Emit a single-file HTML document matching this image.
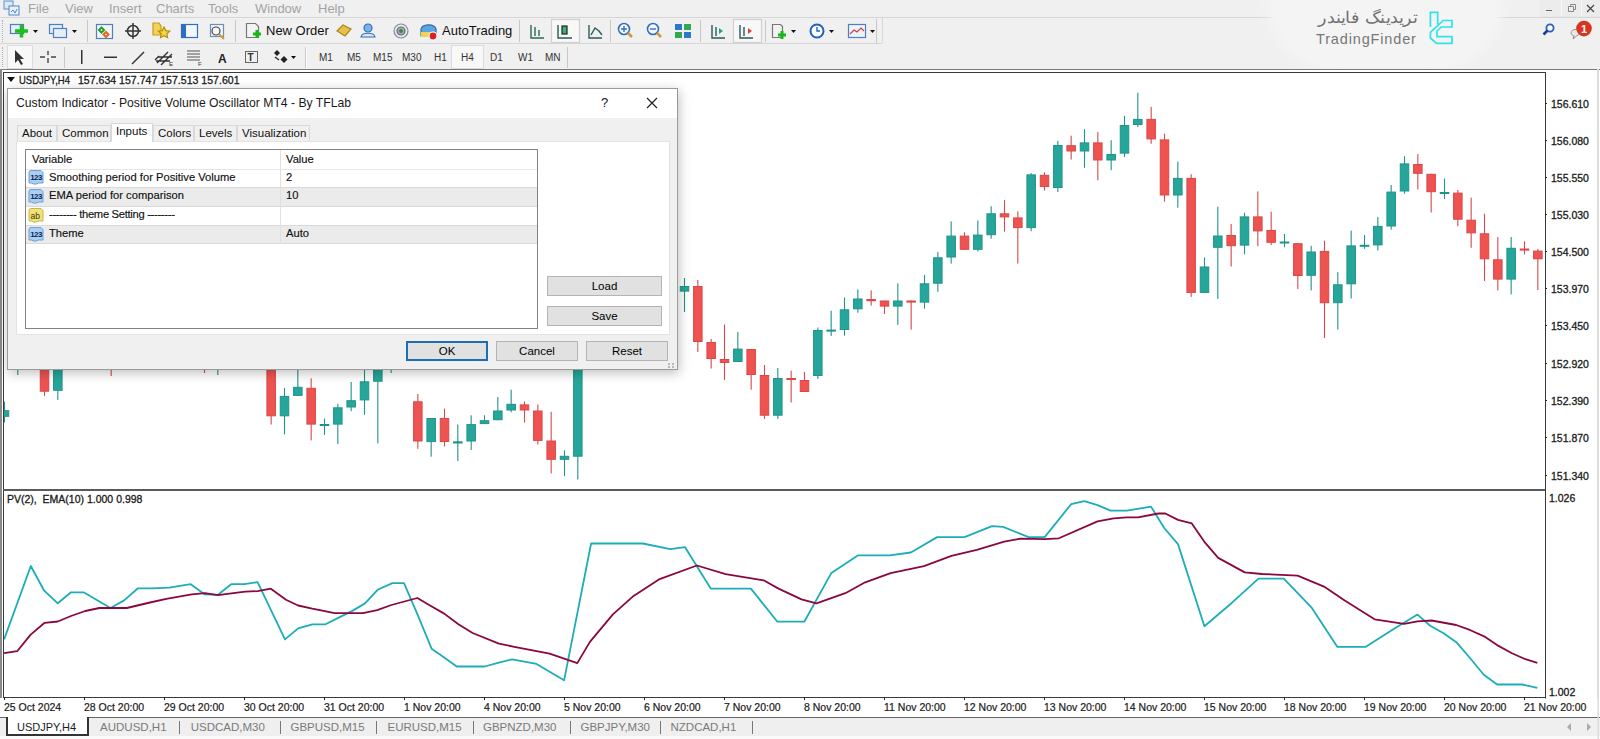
<!DOCTYPE html>
<html><head><meta charset="utf-8"><style>
*{box-sizing:border-box}
body{margin:0;width:1600px;height:739px;overflow:hidden;background:#f0f0f0;font-family:"Liberation Sans",sans-serif;position:relative;color:#000}
.a{position:absolute}
.menu{top:0;left:0;width:1600px;height:17px;font-size:13px;color:#a3a3a3}
.menu span{position:absolute;top:1px}
.tb{font-size:13px;color:#1a1a1a}
.tf{font-size:10px;color:#333;letter-spacing:0}
svg text{font-family:"Liberation Sans",sans-serif}
.ax{font-size:10.5px;fill:#1a1a1a;stroke:#1a1a1a;stroke-width:0.3px}
.dlg{left:7px;top:88px;width:671px;height:282px;background:#f0f0f0;border:1px solid #9a9a9a;box-shadow:1px 3px 11px rgba(0,0,0,0.26)}
.dtitle{left:0;top:0;width:669px;height:29px;background:#fff}
.tab{top:36px;height:16px;font-size:11.5px;color:#111;border:1px solid #d9d9d9;border-bottom:none;background:#f0f0f0;padding-left:4px;line-height:15px}
.grid{left:17px;top:60px;width:513px;height:180px;background:#fff;border:1px solid #828282}
.row{left:0;width:511px;height:19px;font-size:11.2px;line-height:16.5px;color:#111;-webkit-text-stroke:0.15px #111}
.btn{height:20px;background:#e1e1e1;border:1px solid #b4b4b4;font-size:11.5px;text-align:center;line-height:18px;color:#000}
.ctab{top:719px;height:17px;font-size:11.5px;color:#7a7a7a;line-height:17px}
</style></head><body>
<!-- menu -->
<div class="a menu">
 <svg class="a" style="left:3px;top:0px" width="18" height="16" viewBox="0 0 18 16"><rect x="1" y="1" width="9" height="8" fill="#dfe9f5" stroke="#5b8fd0"/><rect x="6" y="6" width="10" height="9" fill="#e9f1fa" stroke="#4d86cf"/><path d="M8 12 L10 10 L12 13 L14 9" stroke="#4d86cf" fill="none"/></svg>
 <span style="left:28px">File</span><span style="left:65px">View</span><span style="left:109px">Insert</span><span style="left:156px">Charts</span><span style="left:208px">Tools</span><span style="left:255px">Window</span><span style="left:318px">Help</span>
</div>
<div class="a" style="left:1540px;top:0;width:60px;height:17px;background:#e8e8e8"></div>
<div class="a" style="left:1545px;top:8px;width:8px;height:1px;background:#555"></div>
<div class="a" style="left:1568px;top:3px;width:8px;height:7px;border:1px solid #777"></div>
<div class="a" style="left:1586px;top:-2px;font-size:14px;color:#444">&#x2715;</div>
<div class="a" style="left:0;top:17px;width:1600px;height:1px;background:#d5d5d5"></div>
<div class="a" style="left:0;top:43px;width:882px;height:1px;background:#d5d5d5"></div><div class="a" style="left:882px;top:18px;width:1px;height:25px;background:#d8d8d8"></div>
<!-- toolbar1 -->
<div class="a" style="left:2px;top:20px;width:2px;height:22px;border-left:1px dotted #b0b0b0"></div>
<div class="a" style="left:2px;top:47px;width:2px;height:20px;border-left:1px dotted #b0b0b0"></div>
<svg class="a" style="left:0;top:18px" width="900" height="26" viewBox="0 0 900 26">
 <g stroke-width="1.2">
 <rect x="10.5" y="6.5" width="13" height="9" fill="#e6eef8" stroke="#4f7fbf"/>
 <path d="M15 13h13M21.5 7v12.5" stroke="#19c019" stroke-width="3.5"/>
 <path d="M33 12h5l-2.5 3z" fill="#111"/>
 <rect x="49.5" y="6.5" width="13" height="9" fill="#e6eef8" stroke="#4f7fbf"/>
 <rect x="53.5" y="10.5" width="13" height="9" fill="#e6eef8" stroke="#4f7fbf"/>
 <path d="M72 12h5l-2.5 3z" fill="#111"/>
 <rect x="87" y="2" width="1" height="22" fill="#c8c8c8"/>
 <rect x="96.5" y="6.5" width="16" height="14" fill="#f2f6fb" stroke="#4f7fbf"/>
 <path d="M101.5 9.5l2.5 2.5-2.5 2.5-2.5-2.5z" fill="none" stroke="#23a023" stroke-width="2"/><path d="M106 14l2.5 2.5-2.5 2.5-2.5-2.5z" fill="none" stroke="#e06a20" stroke-width="2"/>
 <circle cx="133" cy="13" r="5.5" fill="none" stroke="#333" stroke-width="1.5"/><path d="M133 5v16M125 13h16" stroke="#333" stroke-width="1.5"/>
 <path d="M153 5h6l2 3v9h-8z" fill="#f3d25a" stroke="#c59a20"/><path d="M164 9l1.8 3.6 3.9.5-2.8 2.7.7 3.9-3.6-1.9-3.5 1.9.7-3.9-2.9-2.7 4-.5z" fill="#f5d83a" stroke="#b98d10"/>
 <rect x="181.5" y="6.5" width="16" height="13" fill="#f3f7fc" stroke="#2f6fbf"/><rect x="182" y="7" width="4" height="12" fill="#2f6fbf"/>
 <rect x="210.5" y="6.5" width="13" height="12" fill="#f3f7fc" stroke="#6d8fb8"/><circle cx="216" cy="13" r="4" fill="none" stroke="#444"/><path d="M219 16l5 5" stroke="#d19a2a" stroke-width="2"/>
 <rect x="235" y="2" width="1" height="22" fill="#c8c8c8"/>
 <path d="M246.5 5.5h9l3 3v11h-12z" fill="#f4f4f4" stroke="#777"/><path d="M253 16h8M257 12v8" stroke="#19b619" stroke-width="3"/>
 <path d="M337 13l6-6 8 4-6 7z" fill="#e9c04a" stroke="#a98620"/>
 <circle cx="368" cy="10" r="4" fill="#7fb0e6" stroke="#2f6fbf"/><path d="M361 19c1-5 13-5 14 0z" fill="#dfe8f3" stroke="#2f6fbf"/>
 <circle cx="401" cy="13" r="7" fill="#e8ecef" stroke="#889"/><circle cx="401" cy="13" r="4" fill="#aab" stroke="#667"/><circle cx="401" cy="13" r="2" fill="#3a8a3a"/>
 <path d="M421 11c1-5 13-6 15 0v7h-15z" fill="#5aa7e0" stroke="#3a6aa8"/><path d="M421 14h15v5h-15z" fill="#f1d253"/><circle cx="433" cy="18" r="4" fill="#e02020" stroke="#fff"/>
 <rect x="519" y="2" width="1" height="22" fill="#c8c8c8"/>
 <path d="M531 7v13h13M535 9v9M539 12v6" stroke="#2a6a5a" stroke-width="1.4" fill="none"/>
 <rect x="551.5" y="1.5" width="28" height="23" fill="#f8f8f8" stroke="#d0d0d0"/>
 <path d="M558 7v13h14" stroke="#2a5a5a" stroke-width="1.4" fill="none"/><rect x="562" y="8" width="5" height="8" fill="#3bb27b" stroke="#222"/>
 <path d="M589 7v13h13M591 17l4-7 4 3 3 4" stroke="#2a5a5a" stroke-width="1.4" fill="none"/>
 <rect x="610" y="2" width="1" height="22" fill="#c8c8c8"/>
 <circle cx="624" cy="11" r="5.5" fill="#f4f8fd" stroke="#2f6fbf" stroke-width="1.6"/><path d="M621 11h6M624 8v6" stroke="#2f6fbf" stroke-width="1.4"/><path d="M628 15l4 4" stroke="#d19a2a" stroke-width="2.5"/>
 <circle cx="653" cy="11" r="5.5" fill="#f4f8fd" stroke="#2f6fbf" stroke-width="1.6"/><path d="M650 11h6" stroke="#2f6fbf" stroke-width="1.4"/><path d="M657 15l4 4" stroke="#d19a2a" stroke-width="2.5"/>
 <rect x="675" y="6" width="7" height="6" fill="#2b7ac9"/><rect x="684" y="6" width="7" height="6" fill="#32a852"/><rect x="675" y="14" width="7" height="6" fill="#32a852"/><rect x="684" y="14" width="7" height="6" fill="#2b7ac9"/>
 <rect x="700" y="2" width="1" height="22" fill="#c8c8c8"/>
 <path d="M712 7v13h13M716 9v9" stroke="#2a5a5a" stroke-width="1.4" fill="none"/><path d="M719 10l4 3-4 3z" fill="#2aa080"/>
 <rect x="733.5" y="1.5" width="28" height="23" fill="#f8f8f8" stroke="#d0d0d0"/>
 <path d="M740 7v13h13M744 9v9" stroke="#2a5a5a" stroke-width="1.4" fill="none"/><path d="M748 10l4 3-4 3z" fill="#e04040"/>
 <rect x="765" y="2" width="1" height="22" fill="#c8c8c8"/>
 <path d="M772.5 6.5h8l2 2v11h-10z" fill="#f2f2f2" stroke="#777"/><path d="M778 17h8M782 13v8" stroke="#19b619" stroke-width="3"/>
 <path d="M791 12h5l-2.5 3z" fill="#111"/>
 <circle cx="817" cy="13" r="6.5" fill="#fff" stroke="#1f5fbf" stroke-width="2"/><path d="M817 9v4h3" stroke="#1f5fbf" stroke-width="1.4" fill="none"/>
 <path d="M829 12h5l-2.5 3z" fill="#111"/>
 <rect x="848.5" y="6.5" width="17" height="13" fill="#eef3fa" stroke="#4f7fbf"/><path d="M850 16l4-4 3 2 4-4 3 3" stroke="#d04040" fill="none"/>
 <path d="M870 12h5l-2.5 3z" fill="#111"/>
 <rect x="876" y="1" width="1" height="24" fill="#c8c8c8"/>
 </g>
 <text x="266" y="17" font-size="13" fill="#111">New Order</text>
 <text x="442" y="17" font-size="13" fill="#111">AutoTrading</text>
</svg>
<!-- toolbar2 -->
<svg class="a" style="left:0;top:44px" width="600" height="25" viewBox="0 0 600 25">
 <rect x="7.5" y="1.5" width="25" height="23" fill="#f8f8f8" stroke="#dcdcdc"/>
 <path d="M15 6v13l3-3 3 5 2-1-3-5h4z" fill="#333"/>
 <path d="M48 7v4M48 14v5M40 13h5M51 13h5" stroke="#444" stroke-width="1.4"/>
 <rect x="64" y="3" width="1" height="21" fill="#c8c8c8"/>
 <rect x="81" y="6" width="1.5" height="14" fill="#333"/>
 <rect x="104" y="12.5" width="13" height="1.5" fill="#333"/>
 <path d="M132 20l12-12" stroke="#333" stroke-width="1.5"/>
 <path d="M157 19l11-11M161 21l11-11M155 16l4-4M158 13h14M156 17h14" stroke="#333" stroke-width="1.4"/><text x="169" y="22" font-size="6" fill="#333">E</text>
 <path d="M187 7h13M187 10h13M187 13h13M187 16h13" stroke="#555" stroke-width="1"/><text x="198" y="22" font-size="6" fill="#333">F</text>
 <text x="218" y="19" font-size="12" fill="#222" font-weight="bold">A</text>
 <rect x="245.5" y="7.5" width="12" height="11" fill="none" stroke="#666"/><text x="247.5" y="17" font-size="10" fill="#333" font-weight="bold">T</text>
 <path d="M277 6l3 3-3 3-3-3z" fill="#222"/><path d="M284 12l3.5 3.5-3.5 3.5-3.5-3.5z" fill="#222"/><path d="M275 13l4 3" stroke="#333" stroke-width="1.5"/><path d="M291 12h5l-2.5 3z" fill="#111"/>
 <rect x="305" y="3" width="1" height="21" fill="#c8c8c8"/>
 <rect x="306" y="3" width="1" height="21" fill="#fff"/>
 <rect x="451.5" y="1.5" width="32" height="23" fill="#f8f8f8" stroke="#dcdcdc"/>
 <rect x="567" y="3" width="1" height="21" fill="#c8c8c8"/>
 <g font-size="10" fill="#333">
 <text x="319" y="17">M1</text><text x="347" y="17">M5</text><text x="373" y="17">M15</text><text x="402" y="17">M30</text><text x="434" y="17">H1</text><text x="461" y="17">H4</text><text x="490" y="17">D1</text><text x="518" y="17">W1</text><text x="545" y="17">MN</text>
 </g>
</svg>
<!-- watermark -->
<div class="a" style="left:1272px;top:0;width:226px;height:66px;border-radius:0 0 70px 70px;background:#f4f4f4;box-shadow:0 0 12px 6px #f4f4f4"></div>
<div class="a" style="left:1316px;top:8px;width:101px;height:22px;overflow:visible"><div style="position:absolute;right:0;top:0;font-size:16px;color:#707070;direction:rtl;white-space:nowrap;transform:scaleX(1.1);transform-origin:right top">تریدینگ فایندر</div></div>
<svg class="a" style="left:1300px;top:0px" width="170" height="50" viewBox="0 0 170 50">
 <text x="16" y="44.3" font-size="14.5" fill="#777" letter-spacing="0.85">TradingFinder</text>
</svg>
<svg class="a" style="left:1420px;top:5px" width="45" height="45" viewBox="0 0 45 45">
 <path d="M10.4 22V7.3H17.7V19.5M10.4 27.4L23.2 15.5H32V22H21.3L17 26V31.7H32V38.4H16.5L10.4 33Z" fill="none" stroke="#2de3ec" stroke-width="1.7"/>
</svg>
<svg class="a" style="left:1538px;top:20px" width="60" height="22" viewBox="0 0 60 22"><circle cx="12" cy="8" r="3.6" fill="#f4f8ff" stroke="#2a5fb5" stroke-width="1.8"/><path d="M9.5 10.5l-4 4" stroke="#1a3f8f" stroke-width="2.6"/>
<path d="M35 19l1-3c-4-1-4-6 1-6.5 5 0 6 5 1.5 6.5z" fill="#e8e8e8" stroke="#909090"/><circle cx="46" cy="8.6" r="7.8" fill="#d8341f"/><text x="43" y="13" font-size="11" font-weight="bold" fill="#fff">1</text></svg>
<div class="a" style="left:1541px;top:0;width:59px;height:16px;background:#ececec"></div>
<div class="a" style="left:1561px;top:0;width:1px;height:16px;background:#f8f8f8"></div>
<div class="a" style="left:1581px;top:0;width:1px;height:16px;background:#f8f8f8"></div>
<div class="a" style="left:1546px;top:10px;width:6px;height:1px;background:#666"></div>
<svg class="a" style="left:1566px;top:3px" width="10" height="10"><path d="M2.5 3.5h5v5h-5zM4.5 3.5v-2h5v5h-2" fill="none" stroke="#888"/></svg>
<svg class="a" style="left:1586px;top:4px" width="10" height="10"><path d="M1 1l7 7M8 1l-7 7" stroke="#444" stroke-width="1.2"/></svg>

<!-- chart frame -->
<div class="a" style="left:0;top:69px;width:1600px;height:650px;background:#fff;border-top:1px solid #7a7a7a"></div>
<div class="a" style="left:0;top:69px;width:2px;height:647px;background:#8a8a8a"></div>
<div class="a" style="left:1597px;top:69px;width:2px;height:670px;background:#dedede"></div>
<svg class="a" style="left:0;top:0" width="1600" height="739" viewBox="0 0 1600 739">
 <rect x="3.5" y="72.5" width="1542" height="625" fill="#fff" stroke="#3a3a3a" stroke-width="1"/>
 <rect x="3" y="489" width="1543" height="2" fill="#5a5a5a"/>
 <defs><clipPath id="cm"><rect x="4" y="73" width="1541" height="415"/></clipPath><clipPath id="ci"><rect x="4" y="491" width="1541" height="206"/></clipPath></defs>
 <g clip-path="url(#cm)">
<rect x="3.95" y="401.7" width="1.1" height="20.8" fill="#1f9488"/>
<rect x="0.25" y="410.7" width="8.5" height="5.6" fill="#26a69a" stroke="#1f9488" stroke-width="1"/>
<rect x="17.28" y="360.0" width="1.1" height="15.0" fill="#1f9488"/>
<rect x="13.08" y="360.0" width="9.5" height="2.0" fill="#1f9488"/>
<rect x="43.95" y="360.0" width="1.1" height="36.0" fill="#d9484a"/>
<rect x="40.25" y="360.5" width="8.5" height="30.7" fill="#ef5350" stroke="#d9484a" stroke-width="1"/>
<rect x="57.28" y="360.0" width="1.1" height="39.8" fill="#1f9488"/>
<rect x="53.58" y="360.5" width="8.5" height="29.8" fill="#26a69a" stroke="#1f9488" stroke-width="1"/>
<rect x="110.62" y="360.0" width="1.1" height="16.0" fill="#d9484a"/>
<rect x="106.42" y="360.0" width="9.5" height="2.0" fill="#d9484a"/>
<rect x="203.95" y="360.0" width="1.1" height="13.0" fill="#d9484a"/>
<rect x="199.75" y="360.0" width="9.5" height="2.0" fill="#d9484a"/>
<rect x="217.28" y="360.0" width="1.1" height="15.0" fill="#1f9488"/>
<rect x="213.08" y="360.0" width="9.5" height="2.0" fill="#1f9488"/>
<rect x="270.62" y="360.0" width="1.1" height="64.5" fill="#d9484a"/>
<rect x="266.92" y="360.5" width="8.5" height="55.3" fill="#ef5350" stroke="#d9484a" stroke-width="1"/>
<rect x="283.95" y="388.0" width="1.1" height="46.3" fill="#1f9488"/>
<rect x="280.25" y="396.4" width="8.5" height="19.4" fill="#26a69a" stroke="#1f9488" stroke-width="1"/>
<rect x="297.28" y="360.0" width="1.1" height="36.0" fill="#1f9488"/>
<rect x="293.58" y="387.3" width="8.5" height="8.1" fill="#26a69a" stroke="#1f9488" stroke-width="1"/>
<rect x="310.62" y="378.3" width="1.1" height="62.1" fill="#d9484a"/>
<rect x="306.92" y="388.3" width="8.5" height="35.8" fill="#ef5350" stroke="#d9484a" stroke-width="1"/>
<rect x="323.95" y="418.5" width="1.1" height="16.4" fill="#1f9488"/>
<rect x="319.75" y="424.0" width="9.5" height="2.0" fill="#1f9488"/>
<rect x="337.28" y="403.8" width="1.1" height="40.2" fill="#1f9488"/>
<rect x="333.58" y="407.8" width="8.5" height="16.3" fill="#26a69a" stroke="#1f9488" stroke-width="1"/>
<rect x="350.62" y="382.0" width="1.1" height="29.2" fill="#1f9488"/>
<rect x="346.92" y="400.7" width="8.5" height="6.3" fill="#26a69a" stroke="#1f9488" stroke-width="1"/>
<rect x="363.95" y="360.0" width="1.1" height="54.8" fill="#1f9488"/>
<rect x="360.25" y="381.8" width="8.5" height="18.1" fill="#26a69a" stroke="#1f9488" stroke-width="1"/>
<rect x="377.28" y="360.0" width="1.1" height="83.4" fill="#1f9488"/>
<rect x="373.58" y="360.5" width="8.5" height="20.7" fill="#26a69a" stroke="#1f9488" stroke-width="1"/>
<rect x="390.62" y="360.0" width="1.1" height="13.0" fill="#1f9488"/>
<rect x="386.42" y="360.0" width="9.5" height="2.0" fill="#1f9488"/>
<rect x="417.28" y="394.0" width="1.1" height="54.8" fill="#d9484a"/>
<rect x="413.58" y="401.8" width="8.5" height="39.2" fill="#ef5350" stroke="#d9484a" stroke-width="1"/>
<rect x="430.62" y="418.0" width="1.1" height="38.7" fill="#1f9488"/>
<rect x="426.92" y="418.5" width="8.5" height="23.1" fill="#26a69a" stroke="#1f9488" stroke-width="1"/>
<rect x="443.95" y="408.6" width="1.1" height="37.8" fill="#d9484a"/>
<rect x="440.25" y="418.5" width="8.5" height="23.0" fill="#ef5350" stroke="#d9484a" stroke-width="1"/>
<rect x="457.28" y="424.5" width="1.1" height="36.5" fill="#1f9488"/>
<rect x="453.08" y="441.3" width="9.5" height="2.2" fill="#1f9488"/>
<rect x="470.62" y="415.3" width="1.1" height="34.7" fill="#1f9488"/>
<rect x="466.92" y="424.6" width="8.5" height="16.4" fill="#26a69a" stroke="#1f9488" stroke-width="1"/>
<rect x="483.95" y="415.3" width="1.1" height="8.8" fill="#1f9488"/>
<rect x="480.25" y="420.7" width="8.5" height="2.9" fill="#26a69a" stroke="#1f9488" stroke-width="1"/>
<rect x="497.28" y="397.0" width="1.1" height="23.2" fill="#1f9488"/>
<rect x="493.58" y="411.0" width="8.5" height="8.7" fill="#26a69a" stroke="#1f9488" stroke-width="1"/>
<rect x="510.62" y="389.7" width="1.1" height="22.6" fill="#1f9488"/>
<rect x="506.92" y="404.3" width="8.5" height="5.7" fill="#26a69a" stroke="#1f9488" stroke-width="1"/>
<rect x="523.95" y="401.3" width="1.1" height="21.3" fill="#d9484a"/>
<rect x="520.25" y="404.9" width="8.5" height="5.1" fill="#ef5350" stroke="#d9484a" stroke-width="1"/>
<rect x="537.28" y="404.4" width="1.1" height="40.2" fill="#d9484a"/>
<rect x="533.58" y="411.0" width="8.5" height="29.4" fill="#ef5350" stroke="#d9484a" stroke-width="1"/>
<rect x="550.62" y="411.8" width="1.1" height="61.6" fill="#d9484a"/>
<rect x="546.92" y="441.0" width="8.5" height="18.3" fill="#ef5350" stroke="#d9484a" stroke-width="1"/>
<rect x="563.95" y="450.5" width="1.1" height="25.5" fill="#1f9488"/>
<rect x="560.25" y="456.3" width="8.5" height="3.0" fill="#26a69a" stroke="#1f9488" stroke-width="1"/>
<rect x="577.28" y="360.0" width="1.1" height="119.5" fill="#1f9488"/>
<rect x="573.58" y="360.5" width="8.5" height="95.7" fill="#26a69a" stroke="#1f9488" stroke-width="1"/>
<rect x="683.95" y="278.0" width="1.1" height="34.0" fill="#1f9488"/>
<rect x="680.25" y="286.5" width="8.5" height="4.6" fill="#26a69a" stroke="#1f9488" stroke-width="1"/>
<rect x="697.28" y="280.0" width="1.1" height="72.0" fill="#d9484a"/>
<rect x="693.58" y="286.5" width="8.5" height="55.0" fill="#ef5350" stroke="#d9484a" stroke-width="1"/>
<rect x="710.61" y="339.0" width="1.1" height="29.5" fill="#d9484a"/>
<rect x="706.91" y="342.5" width="8.5" height="16.0" fill="#ef5350" stroke="#d9484a" stroke-width="1"/>
<rect x="723.95" y="324.5" width="1.1" height="55.5" fill="#d9484a"/>
<rect x="720.25" y="359.5" width="8.5" height="3.0" fill="#ef5350" stroke="#d9484a" stroke-width="1"/>
<rect x="737.28" y="332.0" width="1.1" height="30.0" fill="#1f9488"/>
<rect x="733.58" y="349.1" width="8.5" height="12.4" fill="#26a69a" stroke="#1f9488" stroke-width="1"/>
<rect x="750.61" y="349.0" width="1.1" height="40.7" fill="#d9484a"/>
<rect x="746.91" y="349.5" width="8.5" height="25.0" fill="#ef5350" stroke="#d9484a" stroke-width="1"/>
<rect x="763.95" y="365.0" width="1.1" height="54.0" fill="#d9484a"/>
<rect x="760.25" y="375.5" width="8.5" height="39.7" fill="#ef5350" stroke="#d9484a" stroke-width="1"/>
<rect x="777.28" y="368.0" width="1.1" height="51.0" fill="#1f9488"/>
<rect x="773.58" y="378.5" width="8.5" height="36.7" fill="#26a69a" stroke="#1f9488" stroke-width="1"/>
<rect x="790.61" y="370.6" width="1.1" height="31.9" fill="#d9484a"/>
<rect x="786.41" y="378.0" width="9.5" height="2.0" fill="#d9484a"/>
<rect x="803.95" y="372.0" width="1.1" height="20.0" fill="#d9484a"/>
<rect x="800.25" y="380.5" width="8.5" height="11.0" fill="#ef5350" stroke="#d9484a" stroke-width="1"/>
<rect x="817.28" y="327.5" width="1.1" height="51.5" fill="#1f9488"/>
<rect x="813.58" y="330.5" width="8.5" height="45.0" fill="#26a69a" stroke="#1f9488" stroke-width="1"/>
<rect x="830.61" y="310.7" width="1.1" height="25.3" fill="#1f9488"/>
<rect x="826.41" y="329.6" width="9.5" height="2.0" fill="#1f9488"/>
<rect x="843.95" y="297.5" width="1.1" height="38.1" fill="#1f9488"/>
<rect x="840.25" y="309.8" width="8.5" height="19.7" fill="#26a69a" stroke="#1f9488" stroke-width="1"/>
<rect x="857.28" y="289.4" width="1.1" height="23.3" fill="#1f9488"/>
<rect x="853.58" y="299.0" width="8.5" height="9.8" fill="#26a69a" stroke="#1f9488" stroke-width="1"/>
<rect x="870.61" y="290.4" width="1.1" height="15.2" fill="#d9484a"/>
<rect x="866.41" y="299.0" width="9.5" height="2.2" fill="#d9484a"/>
<rect x="883.95" y="300.5" width="1.1" height="13.6" fill="#d9484a"/>
<rect x="880.25" y="301.0" width="8.5" height="5.1" fill="#ef5350" stroke="#d9484a" stroke-width="1"/>
<rect x="897.28" y="283.3" width="1.1" height="41.6" fill="#1f9488"/>
<rect x="893.58" y="301.0" width="8.5" height="5.1" fill="#26a69a" stroke="#1f9488" stroke-width="1"/>
<rect x="910.61" y="300.5" width="1.1" height="29.1" fill="#d9484a"/>
<rect x="906.41" y="300.5" width="9.5" height="2.1" fill="#d9484a"/>
<rect x="923.95" y="274.8" width="1.1" height="33.9" fill="#1f9488"/>
<rect x="920.25" y="283.8" width="8.5" height="18.3" fill="#26a69a" stroke="#1f9488" stroke-width="1"/>
<rect x="937.28" y="251.9" width="1.1" height="39.9" fill="#1f9488"/>
<rect x="933.58" y="257.8" width="8.5" height="25.4" fill="#26a69a" stroke="#1f9488" stroke-width="1"/>
<rect x="950.61" y="221.4" width="1.1" height="42.2" fill="#1f9488"/>
<rect x="946.91" y="236.1" width="8.5" height="20.9" fill="#26a69a" stroke="#1f9488" stroke-width="1"/>
<rect x="963.95" y="232.2" width="1.1" height="17.8" fill="#d9484a"/>
<rect x="960.25" y="236.1" width="8.5" height="13.2" fill="#ef5350" stroke="#d9484a" stroke-width="1"/>
<rect x="977.28" y="220.4" width="1.1" height="31.0" fill="#1f9488"/>
<rect x="973.58" y="235.1" width="8.5" height="14.2" fill="#26a69a" stroke="#1f9488" stroke-width="1"/>
<rect x="990.61" y="206.2" width="1.1" height="32.5" fill="#1f9488"/>
<rect x="986.91" y="213.8" width="8.5" height="20.9" fill="#26a69a" stroke="#1f9488" stroke-width="1"/>
<rect x="1003.95" y="200.1" width="1.1" height="31.5" fill="#d9484a"/>
<rect x="1000.25" y="213.8" width="8.5" height="3.1" fill="#ef5350" stroke="#d9484a" stroke-width="1"/>
<rect x="1017.28" y="211.3" width="1.1" height="52.3" fill="#d9484a"/>
<rect x="1013.58" y="217.9" width="8.5" height="9.7" fill="#ef5350" stroke="#d9484a" stroke-width="1"/>
<rect x="1030.61" y="173.1" width="1.1" height="58.1" fill="#1f9488"/>
<rect x="1026.91" y="174.9" width="8.5" height="52.7" fill="#26a69a" stroke="#1f9488" stroke-width="1"/>
<rect x="1043.95" y="172.3" width="1.1" height="18.3" fill="#d9484a"/>
<rect x="1040.25" y="175.3" width="8.5" height="11.2" fill="#ef5350" stroke="#d9484a" stroke-width="1"/>
<rect x="1057.28" y="140.9" width="1.1" height="51.1" fill="#1f9488"/>
<rect x="1053.58" y="145.5" width="8.5" height="42.0" fill="#26a69a" stroke="#1f9488" stroke-width="1"/>
<rect x="1070.61" y="135.7" width="1.1" height="23.9" fill="#d9484a"/>
<rect x="1066.91" y="145.7" width="8.5" height="5.3" fill="#ef5350" stroke="#d9484a" stroke-width="1"/>
<rect x="1083.95" y="129.2" width="1.1" height="38.6" fill="#1f9488"/>
<rect x="1080.25" y="142.9" width="8.5" height="8.1" fill="#26a69a" stroke="#1f9488" stroke-width="1"/>
<rect x="1097.28" y="132.0" width="1.1" height="48.3" fill="#d9484a"/>
<rect x="1093.58" y="142.9" width="8.5" height="17.1" fill="#ef5350" stroke="#d9484a" stroke-width="1"/>
<rect x="1110.61" y="140.2" width="1.1" height="30.0" fill="#1f9488"/>
<rect x="1106.91" y="154.5" width="8.5" height="5.5" fill="#26a69a" stroke="#1f9488" stroke-width="1"/>
<rect x="1123.95" y="115.8" width="1.1" height="41.2" fill="#1f9488"/>
<rect x="1120.25" y="125.5" width="8.5" height="27.6" fill="#26a69a" stroke="#1f9488" stroke-width="1"/>
<rect x="1137.28" y="92.7" width="1.1" height="34.5" fill="#1f9488"/>
<rect x="1133.58" y="119.4" width="8.5" height="5.1" fill="#26a69a" stroke="#1f9488" stroke-width="1"/>
<rect x="1150.61" y="106.9" width="1.1" height="36.9" fill="#d9484a"/>
<rect x="1146.91" y="119.4" width="8.5" height="19.5" fill="#ef5350" stroke="#d9484a" stroke-width="1"/>
<rect x="1163.95" y="133.7" width="1.1" height="67.9" fill="#d9484a"/>
<rect x="1160.25" y="139.9" width="8.5" height="55.1" fill="#ef5350" stroke="#d9484a" stroke-width="1"/>
<rect x="1177.28" y="161.7" width="1.1" height="46.0" fill="#1f9488"/>
<rect x="1173.58" y="178.4" width="8.5" height="16.6" fill="#26a69a" stroke="#1f9488" stroke-width="1"/>
<rect x="1190.61" y="174.2" width="1.1" height="122.7" fill="#d9484a"/>
<rect x="1186.91" y="178.4" width="8.5" height="114.0" fill="#ef5350" stroke="#d9484a" stroke-width="1"/>
<rect x="1203.95" y="257.4" width="1.1" height="35.6" fill="#1f9488"/>
<rect x="1200.25" y="267.0" width="8.5" height="25.4" fill="#26a69a" stroke="#1f9488" stroke-width="1"/>
<rect x="1217.28" y="206.7" width="1.1" height="92.3" fill="#1f9488"/>
<rect x="1213.58" y="236.0" width="8.5" height="11.3" fill="#26a69a" stroke="#1f9488" stroke-width="1"/>
<rect x="1230.61" y="223.9" width="1.1" height="42.6" fill="#d9484a"/>
<rect x="1226.91" y="235.5" width="8.5" height="10.2" fill="#ef5350" stroke="#d9484a" stroke-width="1"/>
<rect x="1243.95" y="212.7" width="1.1" height="41.6" fill="#1f9488"/>
<rect x="1240.25" y="216.9" width="8.5" height="28.2" fill="#26a69a" stroke="#1f9488" stroke-width="1"/>
<rect x="1257.28" y="191.4" width="1.1" height="54.8" fill="#d9484a"/>
<rect x="1253.58" y="216.9" width="8.5" height="14.0" fill="#ef5350" stroke="#d9484a" stroke-width="1"/>
<rect x="1270.61" y="211.7" width="1.1" height="33.5" fill="#d9484a"/>
<rect x="1266.91" y="230.5" width="8.5" height="11.8" fill="#ef5350" stroke="#d9484a" stroke-width="1"/>
<rect x="1283.95" y="234.0" width="1.1" height="13.2" fill="#1f9488"/>
<rect x="1279.75" y="241.5" width="9.5" height="2.0" fill="#1f9488"/>
<rect x="1297.28" y="243.2" width="1.1" height="45.8" fill="#d9484a"/>
<rect x="1293.58" y="243.7" width="8.5" height="31.8" fill="#ef5350" stroke="#d9484a" stroke-width="1"/>
<rect x="1310.61" y="245.8" width="1.1" height="44.6" fill="#1f9488"/>
<rect x="1306.91" y="252.0" width="8.5" height="23.3" fill="#26a69a" stroke="#1f9488" stroke-width="1"/>
<rect x="1323.95" y="240.7" width="1.1" height="97.4" fill="#d9484a"/>
<rect x="1320.25" y="251.4" width="8.5" height="51.3" fill="#ef5350" stroke="#d9484a" stroke-width="1"/>
<rect x="1337.28" y="272.2" width="1.1" height="57.4" fill="#1f9488"/>
<rect x="1333.58" y="284.8" width="8.5" height="17.9" fill="#26a69a" stroke="#1f9488" stroke-width="1"/>
<rect x="1350.61" y="230.6" width="1.1" height="67.9" fill="#1f9488"/>
<rect x="1346.91" y="245.9" width="8.5" height="37.9" fill="#26a69a" stroke="#1f9488" stroke-width="1"/>
<rect x="1363.95" y="235.0" width="1.1" height="13.8" fill="#1f9488"/>
<rect x="1359.75" y="244.8" width="9.5" height="2.0" fill="#1f9488"/>
<rect x="1377.28" y="217.0" width="1.1" height="33.4" fill="#1f9488"/>
<rect x="1373.58" y="226.4" width="8.5" height="18.5" fill="#26a69a" stroke="#1f9488" stroke-width="1"/>
<rect x="1390.61" y="185.0" width="1.1" height="44.6" fill="#1f9488"/>
<rect x="1386.91" y="192.1" width="8.5" height="33.9" fill="#26a69a" stroke="#1f9488" stroke-width="1"/>
<rect x="1403.95" y="156.3" width="1.1" height="37.4" fill="#1f9488"/>
<rect x="1400.25" y="163.9" width="8.5" height="27.1" fill="#26a69a" stroke="#1f9488" stroke-width="1"/>
<rect x="1417.28" y="154.1" width="1.1" height="35.3" fill="#d9484a"/>
<rect x="1413.58" y="164.5" width="8.5" height="8.8" fill="#ef5350" stroke="#d9484a" stroke-width="1"/>
<rect x="1430.61" y="173.8" width="1.1" height="38.7" fill="#d9484a"/>
<rect x="1426.91" y="174.3" width="8.5" height="17.4" fill="#ef5350" stroke="#d9484a" stroke-width="1"/>
<rect x="1443.95" y="178.5" width="1.1" height="20.6" fill="#1f9488"/>
<rect x="1439.75" y="192.0" width="9.5" height="2.0" fill="#1f9488"/>
<rect x="1457.28" y="190.0" width="1.1" height="36.2" fill="#d9484a"/>
<rect x="1453.58" y="193.1" width="8.5" height="26.1" fill="#ef5350" stroke="#d9484a" stroke-width="1"/>
<rect x="1470.61" y="197.6" width="1.1" height="50.2" fill="#d9484a"/>
<rect x="1466.91" y="220.2" width="8.5" height="12.6" fill="#ef5350" stroke="#d9484a" stroke-width="1"/>
<rect x="1483.95" y="213.8" width="1.1" height="67.1" fill="#d9484a"/>
<rect x="1480.25" y="233.8" width="8.5" height="25.0" fill="#ef5350" stroke="#d9484a" stroke-width="1"/>
<rect x="1497.28" y="237.0" width="1.1" height="53.5" fill="#d9484a"/>
<rect x="1493.58" y="259.8" width="8.5" height="19.3" fill="#ef5350" stroke="#d9484a" stroke-width="1"/>
<rect x="1510.61" y="237.0" width="1.1" height="57.4" fill="#1f9488"/>
<rect x="1506.91" y="248.3" width="8.5" height="30.8" fill="#26a69a" stroke="#1f9488" stroke-width="1"/>
<rect x="1523.95" y="241.3" width="1.1" height="13.0" fill="#d9484a"/>
<rect x="1519.75" y="248.5" width="9.5" height="2.1" fill="#d9484a"/>
<rect x="1537.28" y="248.9" width="1.1" height="41.1" fill="#d9484a"/>
<rect x="1533.58" y="251.1" width="8.5" height="7.7" fill="#ef5350" stroke="#d9484a" stroke-width="1"/>
 </g>
 <rect x="0" y="698" width="1600" height="20" fill="#fff"/>
<g clip-path="url(#ci)">
<polyline points="4.1,639.4 30.8,566.0 44.2,590.7 57.8,603.3 71.0,592.3 83.6,592.3 110.5,608.0 124.1,600.4 138.0,588.3 151.1,588.3 169.4,587.7 190.7,584.2 204.9,594.4 218.0,594.8 231.2,584.2 244.4,584.2 257.6,582.2 285.0,639.4 298.1,628.4 312.3,624.3 325.5,624.3 338.7,617.6 351.9,611.1 365.0,603.4 377.6,589.8 392.4,583.1 404.0,583.1 417.8,615.2 431.6,648.7 444.2,657.4 456.7,666.5 484.7,666.5 497.9,662.9 512.1,659.4 536.5,663.9 564.1,680.3 591.1,543.5 642.8,543.5 670.4,549.2 684.9,547.1 710.7,588.6 750.9,588.6 777.4,621.7 804.3,621.7 831.4,572.9 858.1,555.3 889.6,555.3 910.9,552.5 937.2,537.1 964.6,537.1 992.0,526.1 1003.1,526.9 1028.5,537.1 1044.7,537.1 1071.1,504.2 1084.3,501.2 1097.5,505.2 1110.6,510.7 1126.9,510.7 1151.0,506.6 1164.2,528.0 1178.0,544.1 1204.4,626.2 1232.0,602.7 1258.5,578.6 1283.8,578.6 1311.4,607.3 1337.4,646.9 1365.4,646.9 1395.3,628.0 1417.5,614.6 1430.2,625.7 1443.6,633.2 1457.0,642.8 1470.4,658.5 1483.8,674.8 1497.1,684.5 1522.4,684.5 1537.3,687.9" fill="none" stroke="#1cadb8" stroke-width="1.8" stroke-linejoin="round"/>
<polyline points="4.1,653.2 17.2,651.2 30.4,634.9 44.6,622.8 57.8,621.5 71.0,616.0 85.2,611.0 99.4,608.0 126.8,608.0 150.0,602.5 166.3,598.8 191.7,594.4 204.9,593.1 218.0,595.2 233.3,593.1 245.4,591.7 257.6,591.1 270.8,588.7 286.0,599.8 298.1,605.5 312.3,608.7 334.6,613.2 363.0,613.2 377.2,610.1 391.4,605.0 417.4,598.0 430.0,605.5 444.2,613.6 458.4,624.3 472.6,633.0 498.9,643.6 513.1,646.6 549.6,653.7 577.3,663.1 589.9,641.9 612.9,614.3 633.6,595.9 658.9,579.4 696.9,565.5 725.6,574.1 763.6,580.3 778.5,588.6 801.5,599.4 816.5,603.3 845.3,593.2 865.2,582.3 890.6,573.2 924.0,566.1 951.4,555.9 976.8,549.8 1004.2,541.7 1020.4,538.7 1044.7,539.1 1058.9,538.3 1097.5,521.4 1113.7,518.4 1126.9,517.4 1138.0,517.4 1158.4,513.5 1165.3,513.5 1178.0,519.9 1191.8,523.4 1204.4,541.8 1218.2,557.9 1244.7,572.4 1261.9,574.0 1297.6,575.6 1324.0,586.6 1344.7,600.4 1374.6,619.3 1404.1,623.9 1417.5,621.3 1431.7,620.5 1456.2,625.0 1470.4,630.2 1485.2,636.9 1497.1,645.1 1512.0,653.2 1525.4,659.2 1537.3,662.9" fill="none" stroke="#8a0740" stroke-width="1.8" stroke-linejoin="round"/>
</g>
 <rect x="1546" y="73" width="50" height="625" fill="#fff"/>
 <rect x="1545" y="72.5" width="1" height="626" fill="#3a3a3a"/>
 <rect x="3" y="697" width="1543" height="1" fill="#3a3a3a"/>
<rect x="1545" y="103" width="2" height="1" fill="#222"/>
<text x="1551" y="107.6" class="ax">156.610</text>
<rect x="1545" y="140" width="2" height="1" fill="#222"/>
<text x="1551" y="144.6" class="ax">156.080</text>
<rect x="1545" y="177" width="2" height="1" fill="#222"/>
<text x="1551" y="181.6" class="ax">155.550</text>
<rect x="1545" y="214" width="2" height="1" fill="#222"/>
<text x="1551" y="218.6" class="ax">155.030</text>
<rect x="1545" y="251" width="2" height="1" fill="#222"/>
<text x="1551" y="255.6" class="ax">154.500</text>
<rect x="1545" y="288" width="2" height="1" fill="#222"/>
<text x="1551" y="292.6" class="ax">153.970</text>
<rect x="1545" y="325" width="2" height="1" fill="#222"/>
<text x="1551" y="329.6" class="ax">153.450</text>
<rect x="1545" y="363" width="2" height="1" fill="#222"/>
<text x="1551" y="367.6" class="ax">152.920</text>
<rect x="1545" y="400" width="2" height="1" fill="#222"/>
<text x="1551" y="404.6" class="ax">152.390</text>
<rect x="1545" y="437" width="2" height="1" fill="#222"/>
<text x="1551" y="441.6" class="ax">151.870</text>
<rect x="1545" y="475" width="2" height="1" fill="#222"/>
<text x="1551" y="479.6" class="ax">151.340</text>
<rect x="4" y="697" width="1" height="3" fill="#222"/>
<text x="4" y="711" class="ax" style="stroke-width:0.2px">25 Oct 2024</text>
<rect x="84" y="697" width="1" height="3" fill="#222"/>
<text x="84" y="711" class="ax" style="stroke-width:0.2px">28 Oct 20:00</text>
<rect x="164" y="697" width="1" height="3" fill="#222"/>
<text x="164" y="711" class="ax" style="stroke-width:0.2px">29 Oct 20:00</text>
<rect x="244" y="697" width="1" height="3" fill="#222"/>
<text x="244" y="711" class="ax" style="stroke-width:0.2px">30 Oct 20:00</text>
<rect x="324" y="697" width="1" height="3" fill="#222"/>
<text x="324" y="711" class="ax" style="stroke-width:0.2px">31 Oct 20:00</text>
<rect x="404" y="697" width="1" height="3" fill="#222"/>
<text x="404" y="711" class="ax" style="stroke-width:0.2px">1 Nov 20:00</text>
<rect x="484" y="697" width="1" height="3" fill="#222"/>
<text x="484" y="711" class="ax" style="stroke-width:0.2px">4 Nov 20:00</text>
<rect x="564" y="697" width="1" height="3" fill="#222"/>
<text x="564" y="711" class="ax" style="stroke-width:0.2px">5 Nov 20:00</text>
<rect x="644" y="697" width="1" height="3" fill="#222"/>
<text x="644" y="711" class="ax" style="stroke-width:0.2px">6 Nov 20:00</text>
<rect x="724" y="697" width="1" height="3" fill="#222"/>
<text x="724" y="711" class="ax" style="stroke-width:0.2px">7 Nov 20:00</text>
<rect x="804" y="697" width="1" height="3" fill="#222"/>
<text x="804" y="711" class="ax" style="stroke-width:0.2px">8 Nov 20:00</text>
<rect x="884" y="697" width="1" height="3" fill="#222"/>
<text x="884" y="711" class="ax" style="stroke-width:0.2px">11 Nov 20:00</text>
<rect x="964" y="697" width="1" height="3" fill="#222"/>
<text x="964" y="711" class="ax" style="stroke-width:0.2px">12 Nov 20:00</text>
<rect x="1044" y="697" width="1" height="3" fill="#222"/>
<text x="1044" y="711" class="ax" style="stroke-width:0.2px">13 Nov 20:00</text>
<rect x="1124" y="697" width="1" height="3" fill="#222"/>
<text x="1124" y="711" class="ax" style="stroke-width:0.2px">14 Nov 20:00</text>
<rect x="1204" y="697" width="1" height="3" fill="#222"/>
<text x="1204" y="711" class="ax" style="stroke-width:0.2px">15 Nov 20:00</text>
<rect x="1284" y="697" width="1" height="3" fill="#222"/>
<text x="1284" y="711" class="ax" style="stroke-width:0.2px">18 Nov 20:00</text>
<rect x="1364" y="697" width="1" height="3" fill="#222"/>
<text x="1364" y="711" class="ax" style="stroke-width:0.2px">19 Nov 20:00</text>
<rect x="1444" y="697" width="1" height="3" fill="#222"/>
<text x="1444" y="711" class="ax" style="stroke-width:0.2px">20 Nov 20:00</text>
<rect x="1524" y="697" width="1" height="3" fill="#222"/>
<text x="1524" y="711" class="ax" style="stroke-width:0.2px">21 Nov 20:00</text>
 <text x="1549" y="502" class="ax">1.026</text>
 <text x="1549" y="696" class="ax">1.002</text>
 <path d="M7 77h8l-4 5z" fill="#111"/>
 <text x="19" y="84" class="ax" style="font-size:10.5px" textLength="51" lengthAdjust="spacingAndGlyphs">USDJPY,H4</text><text x="78" y="84" class="ax" style="font-size:10.5px" textLength="161.5" lengthAdjust="spacing">157.634 157.747 157.513 157.601</text>
 <text x="7" y="503" class="ax" style="font-size:10.5px;white-space:pre">PV(2),  EMA(10) 1.000 0.998</text>
 <rect x="0" y="717" width="1600" height="1.5" fill="#666"/>
 <rect x="0" y="718" width="1600" height="21" fill="#efefef"/>
 <rect x="0" y="736" width="1600" height="3" fill="#fafafa"/>
 <rect x="1597.5" y="69" width="1.5" height="670" fill="#dcdcdc"/>
</svg>

<!-- chart tabs -->
<div class="a" style="left:6px;top:717px;width:83px;height:19px;background:#fff;border:2px solid #333;border-top:none"></div>
<div class="a ctab" style="left:17px;color:#1a1a1a;font-size:11px">USDJPY,H4</div>
<div class="a ctab" style="left:100.1px">AUDUSD,H1</div>
<div class="a ctab" style="left:190.7px">USDCAD,M30</div>
<div class="a ctab" style="left:290.5px">GBPUSD,M15</div>
<div class="a ctab" style="left:387.5px">EURUSD,M15</div>
<div class="a ctab" style="left:483.0px">GBPNZD,M30</div>
<div class="a ctab" style="left:580.5px">GBPJPY,M30</div>
<div class="a ctab" style="left:670.5px">NZDCAD,H1</div>
<div class="a" style="left:179px;top:721px;width:1px;height:13px;background:#777"></div>
<div class="a" style="left:280px;top:721px;width:1px;height:13px;background:#777"></div>
<div class="a" style="left:376px;top:721px;width:1px;height:13px;background:#777"></div>
<div class="a" style="left:473px;top:721px;width:1px;height:13px;background:#777"></div>
<div class="a" style="left:570px;top:721px;width:1px;height:13px;background:#777"></div>
<div class="a" style="left:660px;top:721px;width:1px;height:13px;background:#777"></div>
<div class="a" style="left:752px;top:721px;width:1px;height:13px;background:#777"></div>
<svg class="a" style="left:1560px;top:720px" width="40" height="14"><path d="M11 3l-4 4 4 4z" fill="#aaa"/><path d="M27 3l4 4-4 4z" fill="#aaa"/></svg>

<!-- dialog -->
<div class="a dlg">
 <div class="a dtitle"></div>
 <div class="a" style="left:8px;top:7px;font-size:12.2px;color:#1a1a1a">Custom Indicator - Positive Volume Oscillator MT4 - By TFLab</div>
 <div class="a" style="left:593px;top:6px;font-size:13px;color:#111">?</div>
 <svg class="a" style="left:638px;top:8px" width="12" height="12"><path d="M1 1l10 10M11 1l-10 10" stroke="#222" stroke-width="1.2"/></svg>
 <div class="a" style="left:8px;top:52px;width:654px;height:194px;background:#fff;border:1px solid #e3e3e3"></div>
 <div class="a tab" style="left:9px;width:40px">About</div>
 <div class="a tab" style="left:49px;width:54px">Common</div>
 <div class="a tab" style="left:103px;top:34px;height:19px;width:42px;background:#fff;border-color:#d9d9d9">Inputs</div>
 <div class="a tab" style="left:145px;width:41px">Colors</div>
 <div class="a tab" style="left:186px;width:43px">Levels</div>
 <div class="a tab" style="left:229px;width:73px">Visualization</div>
 <div class="a grid">
  <div class="a row" style="top:0;height:19px;line-height:18px;padding-left:6px">Variable</div>
  <div class="a row" style="top:19px;height:18px;background:#fff;border-top:1px solid #e6e6e6"></div>
  <div class="a row" style="top:37px;background:#ebebeb;border-top:1px solid #dadada"></div>
  <div class="a row" style="top:56px;background:#fff;border-top:1px solid #dadada"></div>
  <div class="a row" style="top:75px;background:#ebebeb;border-top:1px solid #dadada;border-bottom:1px solid #dadada"></div>
  <div class="a" style="left:254px;top:0;width:1px;height:94px;background:#e0e0e0"></div>
  <div class="a row" style="left:260px;top:0;width:100px;height:19px;line-height:18px">Value</div>
  <div class="a row" style="left:23px;top:19px;width:230px">Smoothing period for Positive Volume</div>
  <div class="a row" style="left:23px;top:37px;width:230px">EMA period for comparison</div>
  <div class="a row" style="left:23px;top:56px;width:230px;letter-spacing:-0.3px">-------- theme Setting --------</div>
  <div class="a row" style="left:23px;top:75px;width:230px">Theme</div>
  <div class="a row" style="left:260px;top:19px;width:100px">2</div>
  <div class="a row" style="left:260px;top:37px;width:100px">10</div>
  <div class="a row" style="left:260px;top:75px;width:100px">Auto</div>
  <svg class="a" style="left:1px;top:19px" width="20" height="80" viewBox="0 0 20 80">
   <g font-size="8" font-weight="bold" fill="#0c1f55" letter-spacing="-0.6">
   <path d="M2 3.5q0-2 2-2h10l2 2v10.5h-5l-1 1h-4l-1-1h-3z" fill="#a9cff2" stroke="#6b9fd6"/><text x="3.2" y="11.2">123</text>
   <path d="M2 22.5q0-2 2-2h10l2 2v10.5h-5l-1 1h-4l-1-1h-3z" fill="#a9cff2" stroke="#6b9fd6"/><text x="3.2" y="30.2">123</text>
   <path d="M2 41.5q0-2 2-2h10l2 2v10.5h-5l-1 1h-4l-1-1h-3z" fill="#f0e27a" stroke="#c9b646"/><text x="3.6" y="49.5" fill="#3d3500" font-size="8.5" font-weight="normal" letter-spacing="0">ab</text>
   <path d="M2 60.5q0-2 2-2h10l2 2v10.5h-5l-1 1h-4l-1-1h-3z" fill="#a9cff2" stroke="#6b9fd6"/><text x="3.2" y="68.2">123</text>
   </g>
  </svg>
 </div>
 <div class="a btn" style="left:539px;top:187px;width:115px">Load</div>
 <div class="a btn" style="left:539px;top:217px;width:115px">Save</div>
 <div class="a btn" style="left:398px;top:252px;width:82px;border:2px solid #1a6fb8;line-height:16px">OK</div>
 <div class="a btn" style="left:488px;top:252px;width:82px">Cancel</div>
 <div class="a btn" style="left:578px;top:252px;width:82px">Reset</div>
 <svg class="a" style="left:660px;top:273px" width="8" height="8"><g fill="#b8b8b8"><rect x="0" y="1" width="2" height="2"/><rect x="4" y="1" width="2" height="2"/><rect x="0" y="4" width="2" height="2"/><rect x="4" y="4" width="2" height="2"/></g></svg>
</div>
</body></html>
